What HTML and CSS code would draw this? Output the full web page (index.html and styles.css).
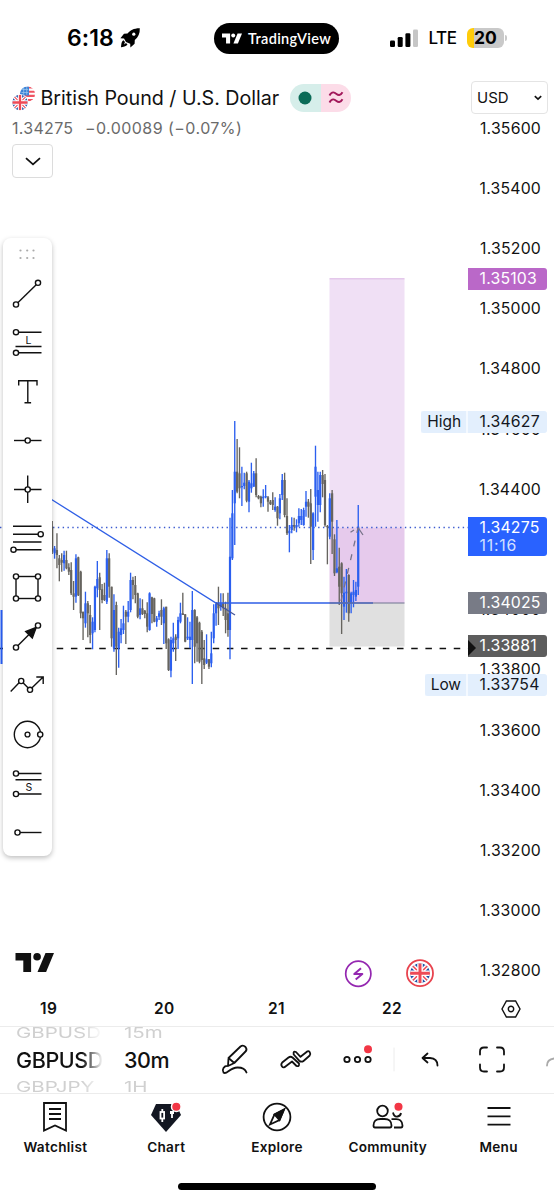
FILE: index.html
```html
<!DOCTYPE html>
<html lang="en">
<head>
<meta charset="utf-8">
<title>British Pound / U.S. Dollar</title>
<link rel="stylesheet" href="styles.css">
</head>
<body>
<svg class="defs" width="0" height="0">
  <defs>
    <clipPath id="round"><circle r="10"/></clipPath>
    <g id="uk" clip-path="url(#round)">
      <rect x="-10" y="-10" width="20" height="20" fill="#1f4fa5"/>
      <path d="M-10-10L10 10M10-10L-10 10" stroke="#fff" stroke-width="4.4"/>
      <path d="M-10-10L10 10M10-10L-10 10" stroke="#ee4a56" stroke-width="1.5"/>
      <path d="M0-10V10M-10 0H10" stroke="#fff" stroke-width="5.6"/>
      <path d="M0-10V10M-10 0H10" stroke="#ee4a56" stroke-width="3"/>
    </g>
    <g id="tv"><path d="M0 0H15.6V19H7.8V7.6H0Z"/><circle cx="21.6" cy="3.8" r="3.8"/><path d="M30 0H38.5L30.6 19H22Z"/></g>
  </defs>
</svg>

<header class="status">
  <span class="clock">6:18</span>
  <svg class="rocket" width="20" height="20" viewBox="0 0 20 20"><path d="M19.800.2C14 .1 10 2.300 7.500 5.500L4 5.800.4 10.200l3.600.2L6 14l4.200 1.700.2 3.900 4.200-3.900.2-3.700C18.200 9 20 5.500 19.800.2Z"/><circle cx="13.800" cy="6.200" r="1.600" fill="#fff"/><path d="M3.500 12.200C1.300 13.300 1.300 17 1 19.200c2-.2 5.200-.5 6.500-2.700L6 15l-2 1.500 1-2.500Z"/></svg>
  <div class="pill"><svg width="20" height="11" viewBox="0 0 38.500 19" fill="#fff"><use href="#tv"/></svg><span>TradingView</span></div>
  <svg class="signal" width="29" height="19" viewBox="0 0 29 19"><rect x="0" y="11.500" width="5" height="6.500" rx="1.300"/><rect x="7.700" y="8" width="5" height="10" rx="1.300"/><rect x="15.400" y="4.300" width="5" height="13.700" rx="1.300"/><rect x="23" y=".6" width="5" height="17.400" rx="1.300" fill="#c6c6c6"/></svg>
  <span class="lte">LTE</span>
  <div class="battery"><span>20</span></div>
</header>

<main class="chart">
  <svg class="plot" width="554" height="914" viewBox="0 76 554 914">
    <rect x="329.500" y="278.500" width="75" height="249" fill="#f0e0f5"/>
    <rect x="329.500" y="527.500" width="75" height="75.500" fill="#e6caec"/>
    <rect x="329.500" y="603" width="75" height="43.500" fill="#e0e0e0"/>
    <path d="M329.500 278.800H404.500" stroke="#dcb8e4"/>
    <path d="M0 527.500H468" stroke="#3c5bd0" stroke-width="1.300" stroke-dasharray="1.400 3.420"/>
    <path d="M0 648.600H468" stroke="#111" stroke-width="1.500" stroke-dasharray="6.500 7.680"/>
    <path d="M1.500 610V664" stroke="#2962ff" stroke-width="2"/>
    <g id="candles"></g>
    <path d="M50 498.500L216 603H373" fill="none" stroke="#2f5fe6" stroke-width="1.300"/>
    <path d="M216 603L235 615" stroke="#44569a" stroke-width="1.300"/>
    <path d="M329.500 603H404.500" stroke="#6f7590" stroke-width="1.200"/>
    <path d="M341 601L358 528" stroke="#77738a" stroke-width="1.300" stroke-dasharray="6 8"/>
    <path d="M350.500 532.300L354 530M358 527.500L363 535" stroke="#77738a" stroke-width="1.300"/>
    <g transform="translate(15.500 953)" fill="#111"><use href="#tv"/></g>
    <circle cx="358.300" cy="973.700" r="12.600" fill="#fff" stroke="#9427b0" stroke-width="1.700"/>
    <path d="M361 968.200L354.300 974.100H362.300L355.700 979.500" fill="none" stroke="#9427b0" stroke-width="2" stroke-linejoin="round"/>
    <circle cx="420" cy="973.200" r="13" fill="#fff" stroke="#e8434e" stroke-width="1.800"/>
    <use href="#uk" transform="translate(420 973.200)"/>
  </svg>

  <aside class="prices">
    <span>1.35600</span><span>1.35400</span><span>1.35200</span><span>1.35000</span><span>1.34800</span><span>1.34600</span><span>1.34400</span><span>1.34200</span><span>1.34000</span><span>1.33800</span><span>1.33600</span><span>1.33400</span><span>1.33200</span><span>1.33000</span><span>1.32800</span>
  </aside>
  <div class="tag target">1.35103</div>
  <div class="tag range high"><b>High</b><span>1.34627</span></div>
  <div class="tag last">1.34275<small>11:16</small></div>
  <div class="tag entry">1.34025</div>
  <div class="tag stop">1.33881</div>
  <div class="tag range low"><b>Low</b><span>1.33754</span></div>

  <section class="legend">
    <div class="title">
      <svg width="25" height="25" viewBox="0 0 25 25">
        <g transform="translate(15.500 8) scale(.76)"><g clip-path="url(#round)"><rect x="-10" y="-10" width="20" height="20" fill="#fff"/><path d="M0-8.500H10M0-3H10M-10 2.500H10M-10 8H10" stroke="#ef5361" stroke-width="2.800"/><rect x="-10" y="-10" width="12" height="12" fill="#3b82d6"/><path d="M-7-6H1M-8-2H1M-5-9V1M-1-9V1" stroke="#9cc8ee" stroke-width="1"/></g></g>
        <circle cx="8" cy="16.500" r="8.600" fill="#fff"/><use href="#uk" transform="translate(8 16.500) scale(.77)"/>
      </svg>
      <h1>British Pound / U.S. Dollar</h1>
      <div class="market"><i><svg width="14" height="14"><circle cx="7" cy="7" r="6.500" fill="#0b6b57"/></svg></i><i><svg width="16" height="14" viewBox="0 0 16 14"><path d="M1.500 4.500C4-.5 7 1.800 8.500 3S12.500 5 14.500 1.300M1.500 11.500C4 6.500 7 8.800 8.500 10S12.500 12 14.500 8.300" fill="none" stroke="#a3195b" stroke-width="1.900"/></svg></i></div>
    </div>
    <p class="quote"><span>1.34275</span><span>−0.00089 (−0.07%)</span></p>
    <button class="fold"><svg width="16" height="9"><path d="M1 1.200L8 7.400L15 1.200" fill="none" stroke="#111" stroke-width="1.800"/></svg></button>
  </section>
  <button class="currency"><span>USD</span><svg width="8" height="6"><path d="M.8 1.200L4 4.200L7.200 1.200" fill="none" stroke="#111" stroke-width="1.600"/></svg></button>

  <nav class="tools">
    <svg class="grip" width="49" height="30" viewBox="-24.500 -15 49 30" fill="#aaa"><circle cx="-7" cy="-3.500" r="1.100"/><circle cx="-.3" cy="-3.500" r="1.100"/><circle cx="6" cy="-3.500" r="1.100"/><circle cx="-7" cy="4" r="1.100"/><circle cx="-.3" cy="4" r="1.100"/><circle cx="6" cy="4" r="1.100"/></svg>
    <svg viewBox="-24.500 -24.500 49 49"><path d="M-11.500 11L10.500-10.500"/><circle cx="-11.500" cy="11" r="2.600"/><circle cx="10.500" cy="-10.700" r="2.600"/></svg>
    <svg viewBox="-24.500 -24.500 49 49"><path d="M-11.500-10.300H14M-12 4H14M-11.500 10.300H14"/><circle cx="-11.500" cy="-10.300" r="2.600"/><circle cx="-11.500" cy="10.300" r="2.600"/><text x="-2" y="1">L</text></svg>
    <svg viewBox="-24.500 -24.500 49 49"><path d="M-8.800-6V-10.800H9.500V-6M.3-10.800V11.200M-3 11.200H3.600"/></svg>
    <svg viewBox="-24.500 -24.500 49 49"><path d="M-13.500 0H14"/><circle cx=".2" r="2.600"/></svg>
    <svg viewBox="-24.500 -24.500 49 49"><path d="M-13.500 0H14M.2-14V13.500"/><circle cx=".2" r="2.600"/></svg>
    <svg viewBox="-24.500 -24.500 49 49"><path d="M-14.500-12.300H14M-14.500-4.300H14M-14.500 3.500H14M-14.500 11.200H14"/><circle cx="13.200" cy="-4.300" r="2.600"/><circle cx="-14" cy="11.200" r="2.600"/></svg>
    <svg viewBox="-24.500 -24.500 49 49"><rect x="-11.500" y="-11" width="22" height="22"/><circle cx="-11.500" cy="-11" r="2.600"/><circle cx="10.500" cy="-11" r="2.600"/><circle cx="-11.500" cy="11" r="2.600"/><circle cx="10.500" cy="11" r="2.600"/></svg>
    <svg viewBox="-24.500 -24.500 49 49"><path d="M-11.500 11L10.500-11"/><path class="solid" d="M8.700-9L-1.800-5L4.800 1.500Z"/><circle cx="-11.500" cy="11" r="2.600"/><circle cx="10.500" cy="-11" r="2.600"/></svg>
    <svg viewBox="-24.500 -24.500 49 49"><path class="line" d="M-16.800 6L-6.500-4.700L2.500 4.300L15.600-8.500M8.800-8.500H15.700V-1.500"/><circle cx="-6.300" cy="-4.500" r="2.600"/><circle cx="2.500" cy="4.300" r="2.600"/></svg>
    <svg viewBox="-24.500 -24.500 49 49"><circle r="13.200"/><circle r="2.400"/><circle cx="12.700" r="2.600"/></svg>
    <svg viewBox="-24.500 -24.500 49 49"><path d="M-11.500-10H14M-12-3.700H14M-11.500 10.500H14"/><circle cx="-11.500" cy="-10" r="2.600"/><circle cx="-11.500" cy="10.500" r="2.600"/><text x="-2" y="7.500">S</text></svg>
    <svg viewBox="-24.500 -24.500 49 49"><path d="M-10 0H14"/><circle cx="-10" r="2.600"/></svg>
  </nav>
</main>

<div class="dates">
  <span>19</span><span>20</span><span>21</span><span>22</span>
  <svg width="20" height="18" viewBox="-10 -9 20 18"><path d="M-4.600-8H4.600L9 0L4.600 8H-4.600L-9 0Z" fill="none" stroke="#111" stroke-width="1.400"/><circle r="2.700" fill="none" stroke="#111" stroke-width="1.400"/></svg>
</div>

<section class="toolbar">
  <div class="wheel symbol"><small>GBPUSD</small><strong>GBPUSD</strong><small>GBPJPY</small></div>
  <div class="wheel interval"><small>15m</small><strong>30m</strong><small>1H</small></div>
  <svg class="actions" width="354" height="66" viewBox="200 1027 354 66" fill="none" stroke="#111" stroke-width="1.800" stroke-linecap="round" stroke-linejoin="round">
    <path d="M228.500 1058L240.500 1046.500Q243 1044.500 245.500 1047Q247.500 1049.500 245.500 1051.500L234.300 1063L228 1066ZM228.500 1058L234.300 1063M228 1066C224 1065.500 221.500 1069.500 223.500 1072.500C226.500 1075.500 229.500 1067.500 237.500 1067.500C242.500 1067.500 245.500 1069.500 246.500 1072.500"/>
    <path d="M284.500 1067.200L292 1061.500L296.500 1066Q299.500 1067 299 1063.500L292.500 1057.500Q290.500 1056 288.500 1057.500L282.200 1062.500Q280.500 1064.500 282 1066.500Q283 1067.800 284.500 1067.200ZM307.500 1051.300L300.500 1056.800L296 1052Q293 1050.500 293.700 1054.500L299.200 1060.700Q301.500 1062.500 303.500 1061L309.500 1055.800Q311 1054 309.800 1052.200Q308.800 1050.800 307.500 1051.300Z"/>
    <circle cx="347" cy="1059.500" r="2.700"/><circle cx="357.500" cy="1059.500" r="2.700"/><circle cx="368" cy="1059.500" r="2.700"/>
    <circle cx="368" cy="1049.300" r="4" fill="#f23645" stroke="none"/>
    <path d="M394 1048V1071" stroke="#ececec" stroke-width="1"/>
    <path d="M427.500 1053.500L422.500 1058L427.500 1062.500M422.800 1058H430Q437.500 1058.500 437.500 1065.500"/>
    <path d="M480 1054.500V1051.500Q480 1047.500 484 1047.500H487M497 1047.500H500Q504 1047.500 504 1051.500V1054.500M504 1064.500V1067.500Q504 1071.500 500 1071.500H497M487 1071.500H484Q480 1071.500 480 1067.500V1064.500"/>
    <path d="M547 1065.500Q547 1059.500 554 1058.500" stroke="#aaa"/>
  </svg>
</section>

<nav class="tabs">
  <a><svg width="34" height="34" viewBox="-17 -17 34 34"><path d="M-11-14H11V13.500L0 8.500L-11 13.500ZM-6-8H6M-6-3H6M-6 2H6"/></svg>Watchlist</a>
  <a><svg width="34" height="34" viewBox="-17 -17 34 34"><path d="M-10-13H10L15-2L0 15L-15-2Z" fill="#131722" stroke="none"/><path d="M-3.700-8V5M6-6V1" stroke="#fff"/><rect x="-5.500" y="-5" width="3.600" height="6.500" fill="#131722" stroke="#fff"/><path d="M4-6V-3H8V-6Z" fill="#fff" stroke="none"/><circle class="dot" cx="10.300" cy="-10.300" r="4.800"/></svg>Chart</a>
  <a><svg width="34" height="34" viewBox="-17 -17 34 34"><circle r="13.400"/><path d="M7-7.500L-2.500-2.500L-7 7.500L2.500 3Z"/><path d="M7-7.500L-2.500-2.500L2.500 3Z" fill="#111"/></svg>Explore</a>
  <a><svg width="34" height="34" viewBox="-17 -17 34 34"><g transform="translate(-2 0)"><path d="M7-4.500Q8 .2 11.500-.5Q14.500-1 15-4M8 10.500H15Q16.500 10.500 16.500 8.500Q16 1.500 9 2.200H5.500"/><circle cx="-3.500" cy="-6" r="5.300"/><path d="M-12.500 8.500Q-12.500 2-5.500 2H-1.500Q5.500 2 5.500 8.500Q5.500 10.500 4 10.500H-11Q-12.500 10.500-12.500 8.500Z"/></g><circle class="dot" cx="10.500" cy="-10.300" r="4.800"/></svg>Community</a>
  <a><svg width="34" height="34" viewBox="-17 -17 34 34"><path d="M-11.500-9H11.500M-11.500-.7H11.500M-11.500 7.600H11.500"/></svg>Menu</a>
</nav>
<footer><i class="home"></i></footer>
<script src="candles.js"></script>
</body>
</html>
```

FILE: styles.css
```css
* { box-sizing: border-box; }
body { margin: 0; width: 554px; height: 1200px; overflow: hidden; display: flex; flex-direction: column; background: #fff; color: #111; font-family: Inter, "Liberation Sans", sans-serif; }
.defs { position: absolute; }
button { background: #fff; font: inherit; color: inherit; padding: 0; }

.status { height: 76px; flex: none; display: flex; align-items: center; padding-left: 67px; color: #000; }
.clock { width: 52.500px; font-size: 23px; font-weight: 600; letter-spacing: .1px; }
.rocket { margin-right: 74.500px; }
.pill { width: 125px; height: 31px; border-radius: 16px; background: #000; color: #fff; display: flex; align-items: center; justify-content: center; gap: 6px; font: 600 14.500px Lato, sans-serif; letter-spacing: .35px; }
.signal { margin-left: 51px; }
.lte { margin-left: 9.500px; width: 38.500px; font-size: 17px; font-weight: 500; letter-spacing: -.4px; }
.battery { width: 37px; height: 20px; border-radius: 6px; background: linear-gradient(90deg, #ffcc0a 7px, #c9c9c9 7px); position: relative; font-size: 17.500px; line-height: 20px; font-weight: 700; text-align: center; }
.battery::after { content: ""; position: absolute; left: 38px; top: 7px; width: 2px; height: 6px; border-radius: 0 2px 2px 0; background: #c9c9c9; }

.chart { position: relative; height: 914px; flex: none; display: flex; justify-content: flex-end; }
.plot { position: absolute; left: 0; top: 0; }
.prices { padding: 22.800px 13px 0 0; display: flex; flex-direction: column; z-index: 1; }
.prices span { height: 60.180px; line-height: 60.180px; font-size: 15.800px; letter-spacing: .2px; text-align: right; }
.tag { position: absolute; z-index: 2; left: 468px; width: 79px; height: 22px; padding-left: 11.500px; border-radius: 0 3px 3px 0; font-size: 15.800px; line-height: 22px; letter-spacing: .2px; color: #fff; }
.target { top: 192px; background: #ba68c8; }
.last { top: 441px; height: 39px; background: #2962ff; line-height: 18px; padding-top: 2px; }
.last small { display: block; font-size: 15.800px; line-height: 18px; letter-spacing: .8px; color: #d4e0ff; }
.entry { top: 516px; background: #787b86; }
.stop { top: 559px; background: #5d5d5d; }
.stop::before { content: ""; position: absolute; left: 0; top: 5px; border: 8px solid transparent; border-left-color: #111; border-right: 0; }
.range { left: auto; right: 7px; width: auto; padding: 0; display: flex; gap: 2px; background: #f4f9ff; color: #131722; }
.range b { padding: 0 5px 0 6px; font-weight: 400; font-size: 15.500px; letter-spacing: -.05px; background: #e3effd; border-radius: 3px 0 0 3px; }
.range span { width: 79px; padding-left: 11.500px; background: #e3effd; border-radius: 0 3px 3px 0; }
.high { top: 334.500px; }
.low { top: 597.500px; }

.legend { position: absolute; left: 12px; top: 8px; }
.title { display: flex; align-items: center; height: 28px; }
.title > svg { margin: 0 3.500px 0 0; }
.title h1 { margin: 0; width: 249.500px; font-size: 19.700px; font-weight: 400; letter-spacing: -.03px; white-space: nowrap; }
.market { display: flex; width: 61px; height: 28px; border-radius: 14px; overflow: hidden; }
.market i { flex: 1; display: flex; align-items: center; justify-content: center; background: #d6eeea; }
.market i + i { background: #fcdce8; }
.quote { margin: 5px 0 5px; height: 22px; line-height: 22px; display: flex; gap: 11.500px; font-size: 16px; letter-spacing: .3px; color: #6b6b6b; }
.quote span + span { letter-spacing: .45px; }
.fold { display: flex; align-items: center; justify-content: center; width: 41px; height: 34px; border: 1px solid #dcdcdc; border-radius: 4px; }
.currency { position: absolute; left: 471px; top: 5px; width: 77px; height: 33px; display: flex; align-items: center; justify-content: space-between; padding: 0 5px; border: 1px solid #e4e4e4; border-radius: 4px; font-size: 15px; }

.tools { position: absolute; z-index: 3; left: 3px; top: 162px; width: 49px; height: 618px; padding-top: .7px; display: flex; flex-direction: column; border-radius: 8px; background: #fff; box-shadow: 0 2px 5px rgba(0,0,0,.25); }
.tools svg { width: 49px; height: 49px; flex: none; fill: #fff; stroke: #111; stroke-width: 1.400; }
.tools .line { fill: none; }
.tools .grip { height: 30px; fill: #aaa; stroke: none; }
.tools .solid { fill: #111; }
.tools text { fill: #111; stroke: none; font-size: 10.500px; }

.dates { height: 36px; flex: none; display: flex; align-items: center; padding: 1px 0 0 40px; font-size: 15.500px; font-weight: 600; }
.dates span { width: 114px; letter-spacing: .4px; }
.dates svg { margin-left: 5px; }

.toolbar { height: 68px; flex: none; display: flex; border-top: 1px solid #ececec; border-bottom: 1px solid #ececec; overflow: hidden; padding-left: 16px; }
.wheel { display: flex; flex-direction: column; align-items: flex-start; overflow: hidden; }
.wheel strong { height: 34px; line-height: 35px; font-size: 21.500px; font-weight: 500; letter-spacing: -.4px; }
.wheel small { height: 16px; line-height: 10px; font-size: 20.500px; color: #d0d0d0; transform: scaleY(.72); }
.wheel small:last-child { line-height: 22px; }
.symbol { width: 86px; -webkit-mask-image: linear-gradient(90deg, #000 66px, transparent 87px); mask-image: linear-gradient(90deg, #000 66px, transparent 87px); }
.interval { width: 76px; margin-left: 22px; }

.tabs { height: 70px; flex: none; display: grid; grid-template-columns: repeat(5, 1fr); }
.tabs a { display: flex; flex-direction: column; align-items: center; gap: 4px; padding-top: 5.500px; font-size: 13.600px; line-height: 18px; font-weight: 600; letter-spacing: .3px; }
.tabs svg { fill: none; stroke: #111; stroke-width: 1.800; overflow: visible; }
.tabs .dot { fill: #f23645; stroke: #fff; stroke-width: 1.500; }
footer { flex: 1; display: flex; justify-content: center; padding-top: 19px; }
.home { width: 198px; height: 7px; border-radius: 4px; background: #000; }
```

FILE: candles.js
```javascript
// Each row: high, low, body top, body bottom, direction (u/d), in thirds of a pixel
// below the series' base line. Bars are spaced 2.375px apart.
const series = [
  { x: 52.2, y: 480, rows: `123 222 140 215 d;198 236 205 220 u;160 265 210 225 d;225 304 235 255 d;220 275 240 248 d;212 272 225 250 u;212 268 240 265 d;250 285 262 275 d;247 345 270 340 d;303 390 340 350 d;223 368 235 350 u;230 348 232 346 d;272 415 275 400 d;395 480 395 415 d;335 443 370 430 u;363 472 370 400 d;375 490 405 465 d;412 508 425 460 u;317 457 320 450 u;243 352 297 325 u;278 450 292 330 d;312 370 328 360 d;308 363 345 360 d;210 372 235 365 u;220 353 235 320 d;320 500 320 475 d;343 515 390 505 u;365 585 375 500 d;443 563 455 505 u;417 490 445 465 u;377 462 430 450 u;390 492 395 410 d;363 427 395 410 u;278 397 300 390 u;290 358 300 315 d;288 370 315 345 d;338 415 340 410 d;355 418 385 405 u;358 405 385 402 d;390 415 392 402 d;367 457 400 440 d;337 452 340 450 u;350 430 352 402 d;353 427 355 425 d;408 440 415 425 u;392 420 400 410 u;358 435 390 410 d;380 492 385 430 u;380 507 380 490 d;475 573 478 570 d;470 592 480 572 u;428 515 475 490 u;463 543 470 480 d;410 507 420 475 u;368 430 400 425 u;338 405 400 405 d;402 487 403 485 d;412 480 470 475 u;425 505 470 480 u;333 612 390 480 u;388 550 390 500 d;408 545 412 490 d;425 550 428 545 d;450 612 455 540 d;480 567 535 555 d;463 552 538 548 u;537 567 538 560 d;455 562 520 550 u;373 490 400 475 u;367 437 372 400 u;320 435 370 385 d;340 392 370 380 u;340 408 370 385 d;365 460 385 420 d;338 470 400 450 d` },
  { x: 230, y: 410, rows: `323 748 440 660 u;240 450 310 445 u;33 405 185 280 u;87 250 185 245 d;112 265 190 235 d;170 288 228 232 u;188 238 218 228 u;185 277 190 272 d;210 307 215 275 u;158 248 220 235 u;183 230 190 230 u;145 262 190 255 d;255 268 258 265 d;257 292 260 280 d;238 290 260 265 u;225 265 258 262 u;258 305 262 275 d;270 285 275 282 d;247 300 270 285 d;262 305 290 300 u;288 347 290 325 d;252 328 265 310 u;192 270 210 255 u;188 322 210 315 d;265 375 318 370 d;345 427 362 370 u;322 370 345 360 u;323 362 345 350 d;328 367 345 352 u;295 350 318 340 u;297 345 318 330 u;293 347 300 345 u;243 320 275 290 u;267 323 275 290 d;237 462 280 350 d;307 450 310 420 u;107 350 170 260 u;185 335 240 285 u;185 307 195 285 u;180 262 195 222 d;192 350 210 345 d;345 463 348 352 d;250 388 265 380 u;240 432 250 335 d;373 498 388 490 d;330 490 475 487 u;413 585 470 530 d;457 672 460 550 d;500 630 548 590 u;477 608 545 550 u;493 635 495 610 d;545 610 550 580 u;510 592 545 555 u;515 573 540 560 u;285 555 350 530 u` }
];
const paint = { u: "#2b5fef", d: "#66645f" };
let marks = "";
for (const s of series) {
  s.rows.split(";").forEach((row, i) => {
    const [hi, lo, top, bottom, dir] = row.split(" ");
    const x = (s.x + i * 2.375).toFixed(2);
    const y = v => (s.y + v / 3).toFixed(1);
    marks += `<path d="M${x} ${y(hi)}V${y(lo)}" stroke="${paint[dir]}" stroke-width="1.350"/>` +
             `<path d="M${x} ${y(top)}V${y(bottom)}" stroke="${paint[dir]}" stroke-width="2.200"/>`;
  });
}
document.getElementById("candles").innerHTML = marks;
```
